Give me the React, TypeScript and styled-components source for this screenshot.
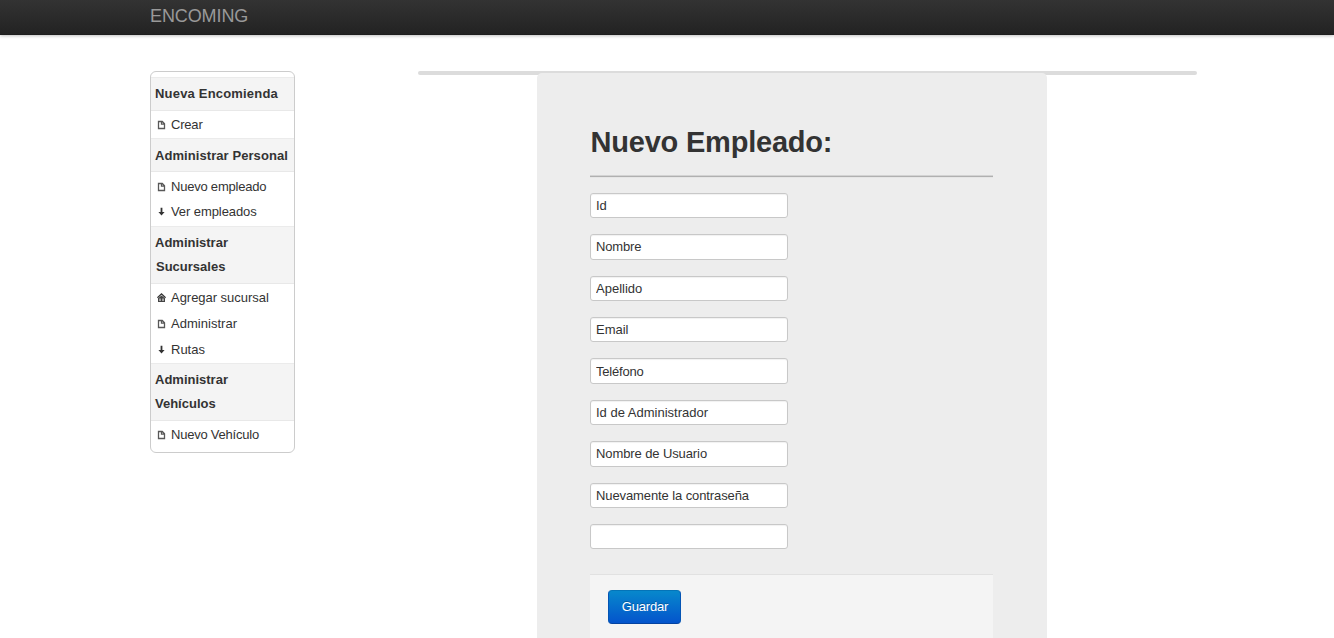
import React from "react";
import styled, { createGlobalStyle } from "styled-components";

const Global = createGlobalStyle`
  * { box-sizing: border-box; }
  html, body { margin: 0; height: 100%; overflow: hidden; background: #fff; }
  body { font-family: "Liberation Sans", Arial, sans-serif; font-size: 13px; color: #333; }
`;

const Shell = styled.div`
  display: flex;
  flex-direction: column;
  height: 638px;
  overflow: hidden;
`;

const Navbar = styled.header`
  flex: none;
  height: 35px;
  padding-left: 150px;
  background: linear-gradient(#333, #222);
  box-shadow: 0 1px 3px rgba(0, 0, 0, 0.25), inset 0 -1px 0 rgba(0, 0, 0, 0.1);
`;

const Brand = styled.span`
  display: block;
  font-size: 18px;
  line-height: 32px;
  letter-spacing: -0.1px;
  color: #999;
`;

const Page = styled.div`
  display: flex;
  align-items: flex-start;
  flex: 1;
  min-height: 0;
  padding: 36px 0 0 150px;
`;

const Sidebar = styled.nav`
  width: 145px;
  height: 382px;
  padding-top: 5px;
  border: 1px solid #ccc;
  border-radius: 6px;
  overflow: hidden;
`;

const GroupTitle = styled.h4<{ $tall?: boolean; $top: number; $spacing: number }>`
  margin: 0;
  height: ${(p) => (p.$tall ? 58 : 34)}px;
  padding: ${(p) => p.$top}px 0 0 4px;
  border-top: 1px solid #ebebeb;
  border-bottom: 1px solid #e8e8e8;
  background: #f4f4f4;
  font-size: 13px;
  font-weight: bold;
  line-height: 24px;
  letter-spacing: ${(p) => p.$spacing}px;
  white-space: nowrap;
`;

const Continued = styled.span<{ $indent: number }>`
  display: block;
  padding-left: ${(p) => p.$indent}px;
`;

const Group = styled.div<{ $height: number }>`
  display: flex;
  flex-direction: column;
  height: ${(p) => p.$height}px;
`;

const Item = styled.a<{ $top: number; $spacing: number }>`
  display: flex;
  align-items: center;
  flex: none;
  height: 25.7px;
  padding: ${(p) => p.$top}px 0 0 5px;
  letter-spacing: ${(p) => p.$spacing}px;
  white-space: nowrap;
`;

const Glyph = styled.svg`
  flex: none;
  width: 11px;
  height: 10px;
  margin: 2px 4px 0 0;
`;

const Content = styled.main`
  display: flex;
  justify-content: center;
  width: 779px;
  height: 4px;
  margin-left: 123px;
  padding: 2px 31px 0 0;
  border-radius: 2px;
  background: #dcdcdc;
`;

const Panel = styled.section`
  flex: none;
  width: 510px;
  height: 565px;
  padding: 50px 54px 0 53px;
  border-radius: 5px 5px 0 0;
  background: #ededed;
  overflow: hidden;
`;

const Title = styled.h1`
  margin: 0;
  height: 54px;
  padding-left: 0.5px;
  border-bottom: 1px solid #b0b0b0;
  box-shadow: inset 0 -1px 0 #d3d3d3, 0 1px 0 #e6e6e6;
  font-size: 29px;
  line-height: 38px;
  letter-spacing: -0.21px;
  color: #333;
`;

const Form = styled.form`
  display: flex;
  flex-direction: column;
  padding-top: 15.8px;
`;

const Field = styled.input<{ $spacing: number }>`
  flex: none;
  width: 198px;
  height: 25.4px;
  margin: 0 0 16px;
  padding: 0 5px;
  border: 1px solid #c8c8c8;
  border-radius: 3px;
  background: #fff;
  box-shadow: inset 0 1px 1px rgba(0, 0, 0, 0.06);
  font: 13px "Liberation Sans", Arial, sans-serif;
  letter-spacing: ${(p) => p.$spacing}px;
  color: #333;
  outline: none;
`;

const Actions = styled.div`
  height: 64px;
  margin-top: 8.6px;
  padding: 15px 18px;
  border-top: 1px solid #e1e1e1;
  background: #f4f4f4;
`;

const Save = styled.button`
  display: block;
  width: 73px;
  height: 34px;
  padding: 0 0 0 1px;
  border: 1px solid;
  border-color: #0474b8 #0454b4 #0443a0;
  border-radius: 4px;
  background: linear-gradient(#0788cc, #0454cc);
  font: 13px "Liberation Sans", Arial, sans-serif;
  letter-spacing: -0.2px;
  color: #fff;
  text-shadow: 0 -1px 0 rgba(0, 0, 0, 0.25);
`;

type Kind = "file" | "down" | "home";

function Icon({ kind }: { kind: Kind }) {
  return (
    <Glyph viewBox="0 0 11 10">
      {kind === "file" && (
        <path d="M2.5 1.5h3.8l2.2 2.2v4.8h-6zM5.5 1.5v2.7h3" fill="#fff" stroke="#585858" strokeWidth="1.3" />
      )}
      {kind === "down" && <path d="M4.6 .8h1.8v4.2h2.2L5.5 8.6 2.4 5h2.2z" fill="#333" />}
      {kind === "home" && (
        <>
          <path d="M5.5 0 10 4.3 9.2 5.2 5.5 1.8 1.8 5.2 1 4.3z" fill="#333" />
          <path
            fillRule="evenodd"
            d="M5.5 2.4 9 5.2V9H2V5.2zM3.5 5.5V8h1V5.5zM6.5 5.5V8h1V5.5z"
            fill="#444"
          />
        </>
      )}
    </Glyph>
  );
}

interface Entry {
  kind: Kind;
  label: string;
  spacing?: number;
  top?: number;
}

interface Section {
  title: string[];
  height: number;
  spacing?: number;
  top?: number;
  indent?: number;
  items: Entry[];
}

const sections: Section[] = [
  {
    title: ["Nueva Encomienda"],
    height: 27,
    spacing: 0.19,
    items: [{ kind: "file", label: "Crear", spacing: -0.2 }],
  },
  {
    title: ["Administrar Personal"],
    height: 54,
    spacing: 0.07,
    top: 5,
    items: [
      { kind: "file", label: "Nuevo empleado", spacing: -0.22, top: 2.6 },
      { kind: "down", label: "Ver empleados", spacing: -0.08 },
    ],
  },
  {
    title: ["Administrar", "Sucursales"],
    height: 79,
    indent: 1,
    items: [
      { kind: "home", label: "Agregar sucursal", spacing: -0.03 },
      { kind: "file", label: "Administrar", spacing: 0.03 },
      { kind: "down", label: "Rutas", top: 2 },
    ],
  },
  {
    title: ["Administrar", "Vehículos"],
    height: 30,
    items: [{ kind: "file", label: "Nuevo Vehículo", spacing: -0.22 }],
  },
];

const fields: { value: string; spacing?: number }[] = [
  { value: "Id" },
  { value: "Nombre", spacing: -0.15 },
  { value: "Apellido" },
  { value: "Email" },
  { value: "Teléfono", spacing: -0.2 },
  { value: "Id de Administrador" },
  { value: "Nombre de Usuario", spacing: -0.1 },
  { value: "Nuevamente la contraseña", spacing: -0.1 },
  { value: "" },
];

export default function App() {
  return (
    <Shell>
      <Global />
      <Navbar>
        <Brand>ENCOMING</Brand>
      </Navbar>
      <Page>
        <Sidebar>
          {sections.map((s) => (
            <React.Fragment key={s.title.join(" ")}>
              <GroupTitle $tall={s.title.length > 1} $top={s.top ?? 4} $spacing={s.spacing ?? 0}>
                {s.title[0]}
                {s.title[1] && <Continued $indent={s.indent ?? 0}>{s.title[1]}</Continued>}
              </GroupTitle>
              <Group $height={s.height}>
                {s.items.map((item) => (
                  <Item key={item.label} $top={item.top ?? 1} $spacing={item.spacing ?? 0}>
                    <Icon kind={item.kind} />
                    {item.label}
                  </Item>
                ))}
              </Group>
            </React.Fragment>
          ))}
        </Sidebar>
        <Content>
          <Panel>
            <Title>Nuevo Empleado:</Title>
            <Form>
              {fields.map((f) => (
                <Field key={f.value} defaultValue={f.value} $spacing={f.spacing ?? 0} />
              ))}
              <Actions>
                <Save type="button">Guardar</Save>
              </Actions>
            </Form>
          </Panel>
        </Content>
      </Page>
    </Shell>
  );
}
